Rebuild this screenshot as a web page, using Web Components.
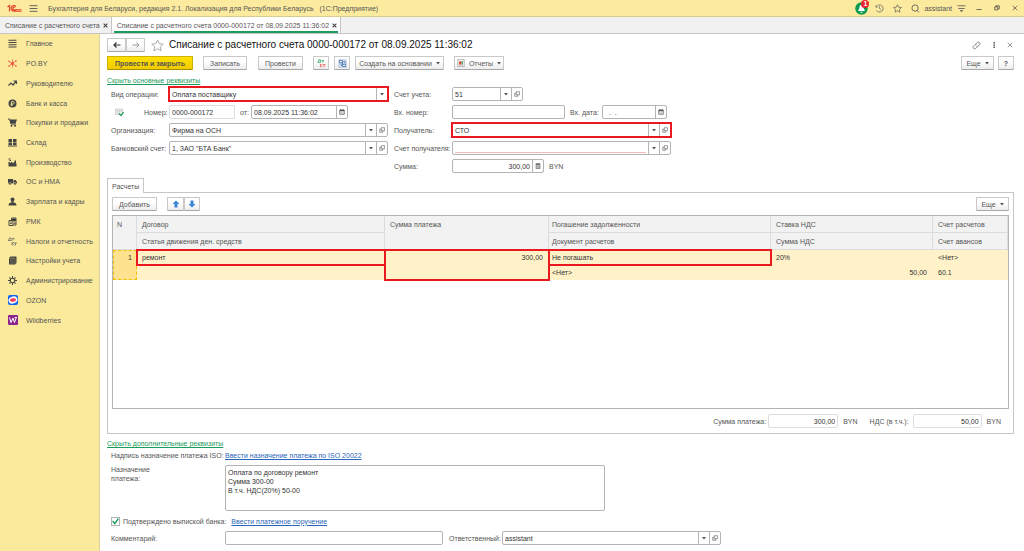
<!DOCTYPE html>
<html lang="ru">
<head>
<meta charset="utf-8">
<title>Списание с расчетного счета</title>
<style>
    body {
        margin: 0;
        font-family: "Liberation Sans", Arial, sans-serif;
        font-size: 7px;
        line-height: 9px;
        color: #555;
        background-color: #fff;
    }
</style>
</head>
<body>
<bank-app></bank-app>

<script>
const icons = {
    logo: ['0 0 30 18', `<g fill="none" stroke="#e0452c" stroke-width="2.4"><path d="M1 6l4-3v12M5 2v13"/><path d="M18 5a5.5 5.5 0 1 0 0 7M16 7a2.6 2.6 0 1 0-2 4.500h15M13 14.500h16"/></g>`],
    burger: ['0 0 16 16', `<path d="M1 3h14M1 8h14M1 13h14" stroke="#555" stroke-width="1.6"/>`],
    bell: ['0 0 26 26', `<circle cx="13" cy="13" r="12.500" fill="#0c9a50"/><path d="M13 5c-4 1-4 5-4.500 8L6 18h14l-2.500-5C17 10 17 6 13 5zM11 19.500h4v2h-4z" fill="#fff"/>`],
    history: ['0 0 20 20', `<g fill="none" stroke="#666" stroke-width="1.700"><path d="M3 6a8 8 0 1 1 0 8M2 3v4h4M10 5v5l4 3"/></g>`],
    star: ['0 0 20 20', `<path d="M10 1.500l2.600 5.700 6.200.7-4.600 4.200 1.300 6.100-5.500-3.100-5.500 3.100 1.300-6.100L1.200 7.900l6.200-.7z" fill="none" stroke="currentColor" stroke-width="1.500"/>`],
    search: ['0 0 20 20', `<g fill="none" stroke="#555" stroke-width="1.800"><circle cx="9" cy="9" r="7"/><path d="M13 14l5 5"/></g>`],
    filter: ['0 0 20 20', `<path d="M1 4h18M3 10h14" stroke="#555" stroke-width="1.800"/><path d="M6 14h8l-4 4z" fill="#444"/>`],
    minimize: ['0 0 16 16', `<path d="M1 12h14" stroke="#444" stroke-width="2"/>`],
    restore: ['0 0 16 16', `<path d="M2 5h8v8H2zM5 5V2h9v8h-4" fill="none" stroke="#444" stroke-width="2"/>`],
    close: ['0 0 16 16', `<path d="M2 2l12 12M14 2L2 14" stroke="currentColor" stroke-width="2"/>`],
    cross: ['0 0 16 16', `<path d="M2 2l12 12M14 2L2 14" stroke="currentColor" stroke-width="3.500"/>`],
    left: ['0 0 16 12', `<path d="M15 6H2M7 1L2 6l5 5" fill="none" stroke="#333" stroke-width="2.400"/>`],
    right: ['0 0 16 12', `<path d="M1 6h13M9 1l5 5-5 5" fill="none" stroke="#999" stroke-width="2"/>`],
    link: ['0 0 20 20', `<g fill="none" stroke="#666" stroke-width="1.700"><path d="M8 7l4-4a3.600 3.600 0 0 1 5 5l-4 4h-3"/><path d="M12 13l-4 4a3.600 3.600 0 0 1-5-5l4-4h3"/></g>`],
    dots: ['0 0 16 16', `<path d="M6.500 0h4v4h-4zM6.500 6h4v4h-4zM6.500 12h4v4h-4z" fill="#555"/>`],
    dtkt: ['0 0 24 24', `<g fill="none" stroke-width="2"><path stroke="#27a05c" d="M2 9h8M3 9l2-7h4v7M12 4h7M15.500 4v6"/><path stroke="#e2574c" d="M9 13v9M14 13l-4 4 4 5M15 15h8M19 15v7"/></g>`],
    structure: ['0 0 24 24', `<path d="M2 2h20v20H2z" fill="#dbe7f5" stroke="#6c8fc0"/><path d="M4 4h8v6H4zM12 14h8v6h-8z" fill="#fff" stroke="#3565a8" stroke-width="2"/><path d="M14 7h5v5M8 12v5h3M9 8l6 7" fill="none" stroke="#3565a8" stroke-width="2"/>`],
    report: ['0 0 20 20', `<path d="M2 1h16v18H2z" fill="#f5f8fa" stroke="#888" stroke-width="1.500"/><path d="M5 6h6v8H5z" fill="#e2452e"/><path d="M11 5h4v9h-4z" fill="#5fa978"/><path d="M5 16h10" stroke="#999"/>`],
    caret: ['0 0 8 8', `<path d="M0 2h8L4 7z" fill="#555"/>`],
    open: ['0 0 16 16', `<path d="M6 2h9v8H6zM6 6H2v8h8v-4" fill="none" stroke="#555" stroke-width="1.600"/>`],
    calendar: ['0 0 16 16', `<path d="M2 3h12v11H2z" fill="none" stroke="#555" stroke-width="2"/><path d="M2 3h12v3H2zM4 0h2v4H4zM10 0h2v4h-2z" fill="#444"/><path d="M4 9h8M4 11.500h8" stroke="#888"/>`],
    calc: ['0 0 16 16', `<path d="M3 1h10v14H3z" fill="#ddd" stroke="#555" stroke-width="1.800"/><path d="M4 3h8v2H4z" fill="#444"/><path d="M5 8h7M5 11h7" stroke="#555" stroke-width="1.500" stroke-dasharray="2 .7"/>`],
    posted: ['0 0 18 16', `<path d="M1 1h14v11H1z" fill="#f4f6f7" stroke="#a2aab0"/><path d="M3 4h10M3 6.500h10M3 9h6" stroke="#a9b2b8"/><path d="M8 10l4 4 5-7" fill="none" stroke="#22a04f" stroke-width="2.500"/>`],
    up: ['0 0 16 16', `<path d="M8 1l7 7h-4v7H5V8H1z" fill="#3b86d8"/>`],
    down: ['0 0 16 16', `<path d="M8 15l7-7h-4V1H5v7H1z" fill="#3b86d8"/>`],
    main: ['0 0 18 18', `<path d="M1 2.500h16M1 7h16M1 11.500h16M1 16h16" stroke="#444" stroke-width="2.200"/>`],
    poby: ['0 0 18 18', `<path d="M9 9V1M9 9v8M9 9L2 5M9 9l7-5M9 9l-7 5M9 9l7 5" stroke="#ef6a48" stroke-width="1.600"/><g fill="#ee5040"><circle cx="9" cy="9" r="3"/><circle cx="2" cy="4.500" r="1.600"/><circle cx="16" cy="4" r="1.600"/><circle cx="2" cy="14" r="1.600"/><circle cx="16" cy="14" r="1.600"/></g>`],
    chart: ['0 0 18 18', `<path d="M1 13l5-5 4 4 6-7M11 4h6v6" fill="none" stroke="#444" stroke-width="2.400"/>`],
    bank: ['0 0 18 18', `<circle cx="9" cy="9" r="8" fill="#444"/><path d="M7 14V5h3a2.500 2.500 0 0 1 0 5H5M5 12h5" fill="none" stroke="#fbea9b" stroke-width="1.600"/>`],
    cart: ['0 0 18 18', `<path d="M0 2h3l3 10h10" fill="none" stroke="#444" stroke-width="2"/><path d="M3 3h15l-3 8H6z" fill="#444"/><circle cx="7" cy="15.500" r="2" fill="#444"/><circle cx="14" cy="15.500" r="2" fill="#444"/>`],
    store: ['0 0 18 18', `<path d="M1 2h7v6H1zM10 2h7v6h-7zM1 9h7v5H1zM10 9h7v5h-7zM0 15h18v2H0z" fill="#444"/>`],
    factory: ['0 0 18 18', `<path d="M1 17V7l5 3V7l5 4V8l6 3v6zM1 1h4v2H1zM3 4h3v2H3zM13 5h3v5h-3z" fill="#444"/>`],
    truck: ['0 0 18 18', `<path d="M0 4h10v9H0zM11 6h4l3 4v3h-7z" fill="#444"/><g fill="#444" stroke="#fbea9b"><circle cx="4" cy="13.500" r="2.500"/><circle cx="14" cy="13.500" r="2.500"/></g>`],
    person: ['0 0 18 18', `<circle cx="9" cy="5" r="4" fill="#444"/><path d="M7 8h4v3c4 0 6 2 6 6H1c0-4 2-6 6-6z" fill="#444"/>`],
    cash: ['0 0 18 18', `<path d="M2 7h8v10H2zM7 7V2h9v14h-5" fill="none" stroke="#444" stroke-width="2"/><path d="M9 4h6v3H9zM4 10h4M4 13h4M12 10h3M12 13h3" stroke="#444" stroke-width="1.500"/>`],
    tax: ['0 0 18 18', `<path d="M0 7h7M1 7l2-5h3v5M8 3h5M10 3v4M8 10v7M12 10l-3 3 3 4M12 12h6M15 12v5" fill="none" stroke="#666" stroke-width="1.500"/>`],
    books: ['0 0 18 18', `<path d="M2 4l3-3h12v13l-3 3H2z" fill="#444"/><path d="M2 5h12v12M6 5l3-4M10 5l3-4M6 5v12M10 5v12" fill="none" stroke="#998f60"/>`],
    gear: ['0 0 18 18', `<circle cx="9" cy="9" r="4.500" fill="none" stroke="#444" stroke-width="2.200"/><path d="M9 0v4M9 14v4M0 9h4M14 9h4M3 3l2 2M13 13l2 2M15 3l-2 2M3 15l2-2" stroke="#444" stroke-width="2.200"/>`],
    ozon: ['0 0 20 20', `<rect width="20" height="20" rx="4" fill="#1463ee"/><ellipse cx="10" cy="10" rx="9" ry="7" fill="#fff" transform="rotate(-20 10 10)"/><ellipse cx="10" cy="10" rx="6" ry="3.500" fill="#f03c58" transform="rotate(-10 10 10)"/>`],
    wb: ['0 0 20 20', `<rect width="20" height="20" rx="2" fill="#8b2390"/><path d="M3 5l3 10 4-9 3 9 4-11M13 5h4" fill="none" stroke="#fff" stroke-width="2"/>`]
}

/**
 * Builds the shadow root of an element.
 */
const render = (host, css, html) => {
    host.attachShadow({ mode: 'open' }).innerHTML = `
<style>
    * { box-sizing: border-box; }
    button, input, select, textarea { font: inherit; color: inherit; margin: 0; border-radius: 0; }
    ${css}
</style>
${html}`
}

/**
 * An svg icon, sized with --w and --h.
 */
customElements.define('app-icon', class extends HTMLElement {
    connectedCallback () {
        const [box, shape] = icons[this.getAttribute('name')]
        render(this, `
    :host { display: inline-flex; flex: none; width: var(--w, 9px); height: var(--h, var(--w, 9px)); }
    svg { width: 100%; height: 100%; display: block; }`,
        `<svg viewBox="${box}" aria-hidden="true">${shape}</svg>`)
    }
})

/**
 * The yellow window header.
 */
customElements.define('title-bar', class extends HTMLElement {
    connectedCallback () {
        render(this, `
    :host { display: flex; align-items: center; height: 17px; padding: 0 0 0 7px; background: #fceb9f; border-bottom: 1px solid #d8cc92; }
    .logo { --w: 15px; --h: 9px; margin-right: 7px; }
    button { display: flex; align-items: center; justify-content: center; width: 18px; height: 16px; padding: 0; border: 0; background: none; position: relative; color: #555; }
    .menu { width: 9px; margin-right: 10px; }
    .title { flex: 1; white-space: pre; }
    .bell { --w: 13px; }
    .badge { position: absolute; top: 0; right: 1px; width: 8px; height: 8px; border-radius: 50%; background: #e8202a; color: #fff; font-weight: bold; line-height: 8px; }
    .user { width: auto; }
    .win { --w: 6px; }`, `
<app-icon class="logo" name="logo"></app-icon>
<button class="menu" aria-label="Меню"><app-icon name="burger"></app-icon></button>
<span class="title"><slot></slot></span>
<button class="bell" aria-label="Оповещения"><app-icon name="bell"></app-icon><span class="badge">1</span></button>
<button aria-label="История"><app-icon name="history"></app-icon></button>
<button aria-label="Избранное"><app-icon name="star"></app-icon></button>
<button aria-label="Поиск"><app-icon name="search"></app-icon></button>
<button class="user">assistant</button>
<button aria-label="Настройка"><app-icon name="filter"></app-icon></button>
<button class="win" aria-label="Свернуть"><app-icon name="minimize"></app-icon></button>
<button class="win" aria-label="Восстановить"><app-icon name="restore"></app-icon></button>
<button class="win" aria-label="Закрыть"><app-icon name="close"></app-icon></button>`)
    }
})

/**
 * One tab of the open windows panel.
 */
customElements.define('window-tab', class extends HTMLElement {
    connectedCallback () {
        render(this, `
    :host { display: flex; align-items: center; gap: 3px; padding: 0 2px; border-right: 1px solid #c6c6c6; }
    :host([active]) { background: #fff; }
    .tab { display: flex; align-items: center; gap: 3px; height: 15px; padding: 2px 1px 0 3px; border-bottom: 2px solid transparent; }
    :host([active]) .tab { border-bottom-color: #1d9b5c; }
    button { display: flex; padding: 0; border: 0; background: none; --w: 5px; color: #444; }`,
        `<div class="tab"><span><slot></slot></span><button aria-label="Закрыть вкладку"><app-icon name="cross"></app-icon></button></div>`)
    }
})

/**
 * The sections panel.
 */
customElements.define('side-nav', class extends HTMLElement {
    connectedCallback () {
        const items = [
            ['main', 'Главное'], ['poby', 'PO.BY'], ['chart', 'Руководителю'], ['bank', 'Банк и касса'],
            ['cart', 'Покупки и продажи'], ['store', 'Склад'], ['factory', 'Производство'], ['truck', 'ОС и НМА'],
            ['person', 'Зарплата и кадры'], ['cash', 'РМК'], ['tax', 'Налоги и отчетность'], ['books', 'Настройки учета'],
            ['gear', 'Администрирование'], ['ozon', 'OZON'], ['wb', 'Wildberries']
        ]
        render(this, `
    :host { display: block; width: 100px; flex: none; background: #fbea9b; border-right: 1px solid #ddd1a0; }
    nav { display: grid; grid-auto-rows: 1fr; height: 296px; }
    a { display: flex; align-items: center; gap: 9px; padding-left: 8px; color: inherit; text-decoration: none; white-space: nowrap; --w: 9px; }
    a:nth-last-child(-n+2) { gap: 8px; --w: 10px; }`,
        `<nav>${items.map(([icon, text]) => `<a href="#"><app-icon name="${icon}"></app-icon>${text}</a>`).join('')}</nav>`)
    }
})

/**
 * A command button with an optional icon and menu arrow.
 */
customElements.define('tool-button', class extends HTMLElement {
    connectedCallback () {
        const icon = this.getAttribute('icon')
        render(this, `
    :host { display: inline-flex; }
    button { display: flex; align-items: center; justify-content: center; gap: 4px; width: 100%; height: 14px; padding: 0 6px; white-space: nowrap; background: linear-gradient(#fff 40%, #ececec); border: 1px solid #c9c9c9; border-bottom-color: #a8a8a8; border-radius: 1px; }
    :host([primary]) button { background: linear-gradient(#ffe100, #f0cb00); border-color: #d0b000; border-bottom-color: #a88d00; font-weight: bold; }
    :host([flat]) button { padding: 0; }
    .caret { --w: 4px; }`, `
<button ${this.title ? `aria-label="${this.title}"` : ''}>
    ${icon ? `<app-icon name="${icon}"></app-icon>` : ''}<slot></slot>
    ${this.hasAttribute('menu') ? '<app-icon class="caret" name="caret"></app-icon>' : ''}
</button>`)
    }
})

/**
 * A labelled field. The kind is text, number, date, select or total.
 */
customElements.define('form-field', class extends HTMLElement {
    connectedCallback () {
        const value = (this.getAttribute('value') ?? '').replaceAll('"', '&quot;')
        const kind = this.getAttribute('kind') ?? 'text'
        const side = { date: 'calendar', number: 'calc' }[kind]
        const control = kind === 'select'
            ? `<select id="field"><option>${value}</option></select><span class="cell caret"><app-icon name="caret"></app-icon></span>`
            : `<input id="field" value="${value}" ${kind === 'total' ? 'readonly' : ''}>`
        render(this, `
    :host { display: flex; align-items: center; }
    label { flex: none; width: var(--label, auto); padding-right: var(--gap, 0); white-space: nowrap; }
    .box { display: flex; flex: 1; min-width: 0; height: 14px; background: #fff; border: 1px solid #b4b4b4; border-radius: 2px; }
    input, select { flex: 1; min-width: 0; width: 0; padding: 0 2px; border: 0; background: none; outline: none; appearance: none; color: #333; }
    .cell { display: flex; align-items: center; justify-content: center; width: 11px; padding: 0; border: 0; border-left: 1px solid #b4b4b4; background: none; --w: 6px; }
    .caret { --w: 4px; }
    :host([kind=number]) input, :host([kind=total]) input { text-align: right; }
    :host([kind=total]) .box, :host([quiet]) .box { border-color: #dedede; }
    :host([required]) select { background: linear-gradient(#f6b9b9, #f6b9b9) 2px 10px / calc(100% - 4px) 1px no-repeat; }
    :host([marked]) .box { outline: 2px solid #e8191f; outline-offset: -1px; border-radius: 0; }`, `
<label for="field">${this.getAttribute('label')}</label>
<div class="box">${control}
    ${side ? `<button class="cell" aria-label="Выбрать"><app-icon name="${side}"></app-icon></button>` : ''}
    ${this.hasAttribute('open') ? '<button class="cell" aria-label="Открыть"><app-icon name="open"></app-icon></button>' : ''}
</div>`)
    }
})

/**
 * The payments table with two lines in each row.
 */
customElements.define('payment-table', class extends HTMLElement {
    connectedCallback () {
        render(this, `
    :host { display: block; border: 1px solid #b4b4b4; background: #fff; }
    table { width: 100%; table-layout: fixed; border-collapse: separate; border-spacing: 0; }
    th, td { padding: 0 4px; font-weight: normal; text-align: left; white-space: nowrap; }
    th { height: 17px; background: #f2f2f2; border-right: 1px solid #dcdcdc; border-bottom: 1px solid #dcdcdc; }
    th[rowspan] { vertical-align: top; padding-top: 4px; }
    td[rowspan] { vertical-align: top; padding-top: 3px; }
    td { height: 15px; background: #fff2c8; color: #333; }
    td.n { background: #ffe290; border: 1px dashed #f0c000; padding-top: 2px; }
    .num { text-align: right; padding-right: 6px; }
    .n.num { padding-right: 4px; }
    .marked { outline: 2px solid #e8191f; outline-offset: -1px; position: relative; }
    td:not(.num, .n), th:not(:first-child), tr + tr th:first-child { padding-left: 5px; }
    td.key, th.key { padding-left: 3px; }`, `
<table>
    <colgroup><col style="width: 24px"><col style="width: 248px"><col style="width: 164px"><col style="width: 222px"><col style="width: 162px"><col></colgroup>
    <thead>
        <tr><th rowspan="2">N</th><th>Договор</th><th rowspan="2">Сумма платежа</th><th class="key">Погашение задолженности</th><th>Ставка НДС</th><th>Счет расчетов</th></tr>
        <tr><th>Статья движения ден. средств</th><th class="key">Документ расчетов</th><th>Сумма НДС</th><th>Счет авансов</th></tr>
    </thead>
    <tbody>
        <tr><td class="n num" rowspan="2">1</td><td class="marked">ремонт</td><td class="num marked" rowspan="2">300,00</td><td class="key marked">Не погашать</td><td>20%</td><td>&lt;Нет&gt;</td></tr>
        <tr><td></td><td class="key">&lt;Нет&gt;</td><td class="num">50,00</td><td>60.1</td></tr>
    </tbody>
</table>`)
    }
})

/**
 * The whole document window.
 */
customElements.define('bank-app', class extends HTMLElement {
    connectedCallback () {
        render(this, `
    :host { display: flex; flex-direction: column; min-height: 100vh; }
    .tabs { display: flex; height: 17px; background: #f1f1f1; border-bottom: 1px solid #c6c6c6; }
    .body { display: flex; flex: 1; }
    main { flex: 1; min-width: 0; display: flex; flex-direction: column; padding: 4px 10px 6px 7px; }
    .row { display: flex; align-items: center; }
    .push { margin-left: auto; }
    h1 { margin: 0; font-size: 10px; line-height: 14px; font-weight: normal; color: #111; }
    .head { height: 14px; }
    .pair { display: flex; }
    .pair tool-button { width: 19px; }
    .nav { --w: 8px; --h: 6px; }
    .fav { --w: 13px; margin: 0 5px 0 6px; color: #aaa; display: flex; padding: 0; border: 0; background: none; }
    .tools { margin-top: 4px; height: 14px; }
    .icons { gap: 10px; padding-right: 1px; --w: 9px; color: #777; }
    .small { --w: 6px; }
    a.toggle { color: #1d9b5c; }
    a { color: #2a66b8; }
    .form { display: grid; grid-template-columns: 277px 277px; gap: 4px 6px; padding-left: 4px; margin-top: 2px; --label: 58px; }
    .inner { --label: auto; --gap: 5px; }
    .doc app-icon { margin: 0 20px 0 4px; }
    .page-tab { align-self: flex-start; height: 15px; margin: 5px 0 -1px; padding: 0 4px; border: 1px solid #c6c6c6; border-bottom: 0; background: #fff; position: relative; }
    .panel { flex: 1; display: flex; flex-direction: column; padding: 4px 4px 5px; border: 1px solid #c6c6c6; }
    payment-table { flex: 1; margin: 4px 0 5px; }
    .totals { justify-content: flex-end; padding-right: 8px; gap: 5px; --gap: 5px; }
    .totals span + form-field { margin-left: 7px; }
    .extra { display: grid; grid-template-columns: 114px 1fr; padding-left: 4px; row-gap: 5px; margin-top: 3px; }
    textarea { display: block; width: 380px; height: 46px; padding: 2px; border: 1px solid #b4b4b4; border-radius: 2px; resize: none; color: #333; }
    .check { padding-left: 4px; margin: 5px 0; height: 10px; }
    .check input { appearance: none; width: 9px; height: 9px; margin-right: 3px; border: 1px solid #b4b4b4; background: none; }
    .check input:checked { background: url('data:image/svg+xml,<svg xmlns="http://www.w3.org/2000/svg" viewBox="0 0 10 10"><path d="M1 4l3 4 5-7" fill="none" stroke="%230c9a50" stroke-width="2"/></svg>'); }
    .check a { margin-left: 5px; }
    .foot { padding-left: 4px; gap: 6px; }`, `
<title-bar>Бухгалтерия для Беларуси, редакция 2.1. Локализация для Республики Беларусь   (1С:Предприятие)</title-bar>
<div class="tabs">
    <window-tab>Списание с расчетного счета</window-tab>
    <window-tab active>Списание с расчетного счета 0000-000172 от 08.09.2025 11:36:02</window-tab>
</div>
<div class="body">
    <side-nav></side-nav>
    <main>
        <div class="row head">
            <div class="pair nav"><tool-button flat icon="left" title="Назад"></tool-button><tool-button flat icon="right" title="Вперед"></tool-button></div>
            <button class="fav" aria-label="В избранное"><app-icon name="star"></app-icon></button>
            <h1>Списание с расчетного счета 0000-000172 от 08.09.2025 11:36:02</h1>
            <div class="row push icons"><app-icon name="link"></app-icon><app-icon class="small" name="dots"></app-icon><app-icon class="small" name="close"></app-icon></div>
        </div>
        <div class="row tools">
            <tool-button primary style="width: 86px">Провести и закрыть</tool-button>
            <tool-button style="width: 44px; margin-left: 10px">Записать</tool-button>
            <tool-button style="width: 45px; margin: 0 10px 0 11px">Провести</tool-button>
            <tool-button flat icon="dtkt" title="Проводки" style="width: 16px"></tool-button>
            <tool-button flat icon="structure" title="Структура" style="width: 16px; margin: 0 5px"></tool-button>
            <tool-button menu style="width: 89px">Создать на основании</tool-button>
            <tool-button menu icon="report" style="width: 50px; margin-left: 10px; --w: 8px">Отчеты</tool-button>
            <tool-button class="push" menu style="width: 33px">Еще</tool-button>
            <tool-button style="width: 16px; margin-left: 4px; font-weight: bold">?</tool-button>
        </div>
        <div class="row" style="margin-top: 6px"><a class="toggle" href="#">Скрыть основные реквизиты</a></div>
        <div class="form">
            <form-field kind="select" marked label="Вид операции:" value="Оплата поставщику"></form-field>
            <form-field kind="select" open label="Счет учета:" value="51" style="width: 129px"></form-field>
            <div class="row doc inner">
                <app-icon name="posted"></app-icon>
                <form-field quiet label="Номер:" value="0000-000172" style="width: 91px; --label: 25px; --gap: 0px"></form-field>
                <form-field kind="date" label="от:" value="08.09.2025 11:36:02" style="width: 108px; margin-left: 5px; --label: 11px; --gap: 0px"></form-field>
            </div>
            <div class="row">
                <form-field label="Вх. номер:" style="width: 171px"></form-field>
                <form-field kind="date" label="Вх. дата:" value="&nbsp; . &nbsp;." style="width: 97px; margin-left: 5px; --label: 32px"></form-field>
            </div>
            <form-field kind="select" open label="Организация:" value="Фирма на ОСН"></form-field>
            <form-field kind="select" open marked label="Получатель:" value="СТО"></form-field>
            <form-field kind="select" open label="Банковский счет:" value='1, ЗАО "БТА Банк"'></form-field>
            <form-field kind="select" open required label="Счет получателя:" value=""></form-field>
            <span></span>
            <div class="row"><form-field kind="number" label="Сумма:" value="300,00" style="width: 150px; margin-right: 5px"></form-field>BYN</div>
        </div>
        <button class="page-tab">Расчеты</button>
        <section class="panel">
            <div class="row">
                <tool-button style="width: 45px">Добавить</tool-button>
                <div class="pair" style="margin-left: 10px; --w: 8px"><tool-button flat icon="up" title="Вверх" style="width: 17px"></tool-button><tool-button flat icon="down" title="Вниз" style="width: 16px"></tool-button></div>
                <tool-button class="push" menu style="width: 33px">Еще</tool-button>
            </div>
            <payment-table></payment-table>
            <div class="row totals">
                <form-field kind="total" label="Сумма платежа:" value="300,00" style="width: 125px; --label: 55px"></form-field><span>BYN</span>
                <form-field kind="total" label="НДС (в т.ч.):" value="50,00" style="width: 112px; --label: 43px"></form-field><span>BYN</span>
            </div>
        </section>
        <div class="row" style="margin-top: 5px"><a class="toggle" href="#">Скрыть дополнительные реквизиты</a></div>
        <div class="extra">
            <span style="white-space: nowrap">Надпись назначение платежа ISO:</span><a href="#">Ввести назначение платежа по ISO 20022</a>
            <label for="purpose">Назначение<br>платежа:</label>
            <textarea id="purpose">Оплата по договору ремонт
Сумма 300-00
В т.ч. НДС(20%) 50-00</textarea>
        </div>
        <div class="row check">
            <input type="checkbox" id="confirmed" checked><label for="confirmed">Подтверждено выпиской банка:</label>
            <a href="#">Ввести платежное поручение</a>
        </div>
        <div class="row foot">
            <form-field label="Комментарий:" style="width: 332px; --label: 114px"></form-field>
            <form-field kind="select" open label="Ответственный:" value="assistant" style="width: 272px; --label: 53px"></form-field>
        </div>
    </main>
</div>`)
    }
})
</script>
</body>
</html>
